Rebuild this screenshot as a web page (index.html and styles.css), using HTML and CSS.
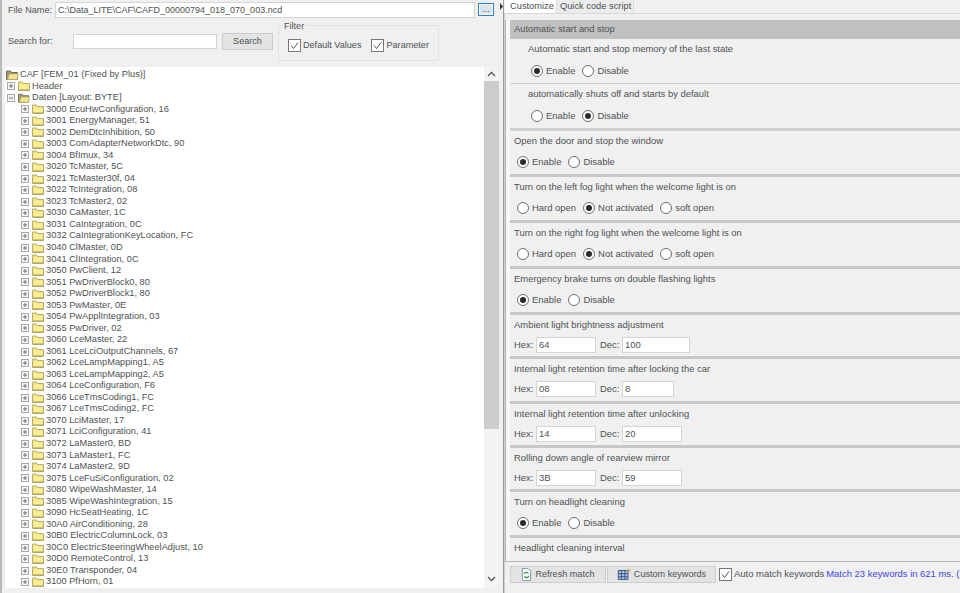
FILE: index.html
```html
<!DOCTYPE html>
<html lang="en">
<head>
<meta charset="utf-8">
<title>Coding</title>
<link rel="stylesheet" href="styles.css">
</head>
<body>
<svg class="defs" width="0" height="0" aria-hidden="true">
  <defs>
    <symbol id="folder" viewBox="0 0 12 10">
      <path d="M.5 2.500V1h4l1 1.500H11.500v7H.5z" fill="#f5e27c" stroke="#b5ad6c"/>
      <path d="M1.500 3.500h9v5h-9z" fill="#fbec96"/>
      <path d="M1 9h10.500" stroke="#a89f5a"/>
    </symbol>
    <symbol id="folderopen" viewBox="0 0 13 10">
      <path d="M.5 9.500V1h4l1 1.500h6v7z" fill="#9c9878" stroke="#6f6c54"/>
      <path d="M3.500 4h9L11 9.500H1.500z" fill="#f6e58a" stroke="#b5ad6c" stroke-width=".7"/>
    </symbol>
    <symbol id="plus" viewBox="0 0 8 8">
      <rect x=".5" y=".5" width="7" height="7" fill="#f4f4f4" stroke="#a8a8a8"/>
      <path d="M2 4h4M4 2v4" stroke="#6f7278"/>
    </symbol>
    <symbol id="minus" viewBox="0 0 8 8">
      <rect x=".5" y=".5" width="7" height="7" fill="#f4f4f4" stroke="#a8a8a8"/>
      <path d="M2 4h4" stroke="#6f7278"/>
    </symbol>
    <symbol id="check" viewBox="0 0 13 13">
      <rect x=".5" y=".5" width="12" height="12" fill="#fff" stroke="#777"/>
      <path d="M3 6.500l2.500 3L10 3.500" fill="none" stroke="#555"/>
    </symbol>
  </defs>
</svg>
<div class="app">
  <section class="left">
    <div class="file-row">
      <span class="label">File Name:</span>
      <div class="field file-field">C:\Data_LITE\CAF\CAFD_00000794_018_070_003.ncd</div>
      <div class="dots">...</div>
    </div>
    <div class="search-row">
      <span class="label search-label">Search for:</span>
      <div class="field search-field"></div>
      <div class="btn search-btn">Search</div>
      <div class="filter">
        <span class="filter-title">Filter</span>
        <span class="chk"><svg class="chk-box"><use href="#check"/></svg>Default Values</span>
        <span class="chk"><svg class="chk-box"><use href="#check"/></svg>Parameter</span>
      </div>
    </div>
    <div class="tree-wrap">
      <div class="tree">
        <div class="node n0"><svg class="fold"><use href="#folderopen"/></svg>CAF [FEM_01 (Fixed by Plus)]</div>
        <div class="node n1"><svg class="tog"><use href="#plus"/></svg><svg class="fold"><use href="#folder"/></svg>Header</div>
        <div class="node n1"><svg class="tog"><use href="#minus"/></svg><svg class="fold"><use href="#folderopen"/></svg>Daten [Layout: BYTE]</div>
        <div class="node n2"><svg class="tog"><use href="#plus"/></svg><svg class="fold"><use href="#folder"/></svg>3000 EcuHwConfiguration, 16</div>
        <div class="node n2"><svg class="tog"><use href="#plus"/></svg><svg class="fold"><use href="#folder"/></svg>3001 EnergyManager, 51</div>
        <div class="node n2"><svg class="tog"><use href="#plus"/></svg><svg class="fold"><use href="#folder"/></svg>3002 DemDtcInhibition, 50</div>
        <div class="node n2"><svg class="tog"><use href="#plus"/></svg><svg class="fold"><use href="#folder"/></svg>3003 ComAdapterNetworkDtc, 90</div>
        <div class="node n2"><svg class="tog"><use href="#plus"/></svg><svg class="fold"><use href="#folder"/></svg>3004 BfImux, 34</div>
        <div class="node n2"><svg class="tog"><use href="#plus"/></svg><svg class="fold"><use href="#folder"/></svg>3020 TcMaster, 5C</div>
        <div class="node n2"><svg class="tog"><use href="#plus"/></svg><svg class="fold"><use href="#folder"/></svg>3021 TcMaster30f, 04</div>
        <div class="node n2"><svg class="tog"><use href="#plus"/></svg><svg class="fold"><use href="#folder"/></svg>3022 TcIntegration, 08</div>
        <div class="node n2"><svg class="tog"><use href="#plus"/></svg><svg class="fold"><use href="#folder"/></svg>3023 TcMaster2, 02</div>
        <div class="node n2"><svg class="tog"><use href="#plus"/></svg><svg class="fold"><use href="#folder"/></svg>3030 CaMaster, 1C</div>
        <div class="node n2"><svg class="tog"><use href="#plus"/></svg><svg class="fold"><use href="#folder"/></svg>3031 CaIntegration, 0C</div>
        <div class="node n2"><svg class="tog"><use href="#plus"/></svg><svg class="fold"><use href="#folder"/></svg>3032 CaIntegrationKeyLocation, FC</div>
        <div class="node n2"><svg class="tog"><use href="#plus"/></svg><svg class="fold"><use href="#folder"/></svg>3040 ClMaster, 0D</div>
        <div class="node n2"><svg class="tog"><use href="#plus"/></svg><svg class="fold"><use href="#folder"/></svg>3041 ClIntegration, 0C</div>
        <div class="node n2"><svg class="tog"><use href="#plus"/></svg><svg class="fold"><use href="#folder"/></svg>3050 PwClient, 12</div>
        <div class="node n2"><svg class="tog"><use href="#plus"/></svg><svg class="fold"><use href="#folder"/></svg>3051 PwDriverBlock0, 80</div>
        <div class="node n2"><svg class="tog"><use href="#plus"/></svg><svg class="fold"><use href="#folder"/></svg>3052 PwDriverBlock1, 80</div>
        <div class="node n2"><svg class="tog"><use href="#plus"/></svg><svg class="fold"><use href="#folder"/></svg>3053 PwMaster, 0E</div>
        <div class="node n2"><svg class="tog"><use href="#plus"/></svg><svg class="fold"><use href="#folder"/></svg>3054 PwApplIntegration, 03</div>
        <div class="node n2"><svg class="tog"><use href="#plus"/></svg><svg class="fold"><use href="#folder"/></svg>3055 PwDriver, 02</div>
        <div class="node n2"><svg class="tog"><use href="#plus"/></svg><svg class="fold"><use href="#folder"/></svg>3060 LceMaster, 22</div>
        <div class="node n2"><svg class="tog"><use href="#plus"/></svg><svg class="fold"><use href="#folder"/></svg>3061 LceLciOutputChannels, 67</div>
        <div class="node n2"><svg class="tog"><use href="#plus"/></svg><svg class="fold"><use href="#folder"/></svg>3062 LceLampMapping1, A5</div>
        <div class="node n2"><svg class="tog"><use href="#plus"/></svg><svg class="fold"><use href="#folder"/></svg>3063 LceLampMapping2, A5</div>
        <div class="node n2"><svg class="tog"><use href="#plus"/></svg><svg class="fold"><use href="#folder"/></svg>3064 LceConfiguration, F6</div>
        <div class="node n2"><svg class="tog"><use href="#plus"/></svg><svg class="fold"><use href="#folder"/></svg>3066 LceTmsCoding1, FC</div>
        <div class="node n2"><svg class="tog"><use href="#plus"/></svg><svg class="fold"><use href="#folder"/></svg>3067 LceTmsCoding2, FC</div>
        <div class="node n2"><svg class="tog"><use href="#plus"/></svg><svg class="fold"><use href="#folder"/></svg>3070 LciMaster, 17</div>
        <div class="node n2"><svg class="tog"><use href="#plus"/></svg><svg class="fold"><use href="#folder"/></svg>3071 LciConfiguration, 41</div>
        <div class="node n2"><svg class="tog"><use href="#plus"/></svg><svg class="fold"><use href="#folder"/></svg>3072 LaMaster0, BD</div>
        <div class="node n2"><svg class="tog"><use href="#plus"/></svg><svg class="fold"><use href="#folder"/></svg>3073 LaMaster1, FC</div>
        <div class="node n2"><svg class="tog"><use href="#plus"/></svg><svg class="fold"><use href="#folder"/></svg>3074 LaMaster2, 9D</div>
        <div class="node n2"><svg class="tog"><use href="#plus"/></svg><svg class="fold"><use href="#folder"/></svg>3075 LceFuSiConfiguration, 02</div>
        <div class="node n2"><svg class="tog"><use href="#plus"/></svg><svg class="fold"><use href="#folder"/></svg>3080 WipeWashMaster, 14</div>
        <div class="node n2"><svg class="tog"><use href="#plus"/></svg><svg class="fold"><use href="#folder"/></svg>3085 WipeWashIntegration, 15</div>
        <div class="node n2"><svg class="tog"><use href="#plus"/></svg><svg class="fold"><use href="#folder"/></svg>3090 HcSeatHeating, 1C</div>
        <div class="node n2"><svg class="tog"><use href="#plus"/></svg><svg class="fold"><use href="#folder"/></svg>30A0 AirConditioning, 28</div>
        <div class="node n2"><svg class="tog"><use href="#plus"/></svg><svg class="fold"><use href="#folder"/></svg>30B0 ElectricColumnLock, 03</div>
        <div class="node n2"><svg class="tog"><use href="#plus"/></svg><svg class="fold"><use href="#folder"/></svg>30C0 ElectricSteeringWheelAdjust, 10</div>
        <div class="node n2"><svg class="tog"><use href="#plus"/></svg><svg class="fold"><use href="#folder"/></svg>30D0 RemoteControl, 13</div>
        <div class="node n2"><svg class="tog"><use href="#plus"/></svg><svg class="fold"><use href="#folder"/></svg>30E0 Transponder, 04</div>
        <div class="node n2"><svg class="tog"><use href="#plus"/></svg><svg class="fold"><use href="#folder"/></svg>3100 PfHorn, 01</div>
      </div>
      <div class="vscroll">
        <svg class="arrow" viewBox="0 0 9 6"><path d="M1 5l3.500-3.500L8 5" fill="none" stroke="#555" stroke-width="1.3"/></svg>
        <div class="thumb"></div>
        <svg class="arrow" viewBox="0 0 9 6"><path d="M1 1l3.500 3.500L8 1" fill="none" stroke="#555" stroke-width="1.3"/></svg>
      </div>
    </div>
  </section>
  <div class="splitter"><svg class="grip" viewBox="0 0 3 7"><path d="M0 0l3 3.500L0 7z" fill="#333"/></svg></div>
  <section class="right">
    <div class="tabs">
      <span class="tab active">Customize</span>
      <span class="tab">Quick code script</span>
    </div>
    <div class="page">
      <div class="list">
        <div class="group-head">Automatic start and stop</div>
        <div class="item sub"><div class="title">Automatic start and stop memory of the last state</div>
          <div class="opts"><span class="opt"><i class="radio on"></i>Enable</span><span class="opt"><i class="radio"></i>Disable</span></div></div>
        <div class="item sub last"><div class="title">automatically shuts off and starts by default</div>
          <div class="opts"><span class="opt"><i class="radio"></i>Enable</span><span class="opt"><i class="radio on"></i>Disable</span></div></div>
        <div class="item"><div class="title">Open the door and stop the window</div>
          <div class="opts"><span class="opt"><i class="radio on"></i>Enable</span><span class="opt"><i class="radio"></i>Disable</span></div></div>
        <div class="item"><div class="title">Turn on the left fog light when the welcome light is on</div>
          <div class="opts"><span class="opt"><i class="radio"></i>Hard open</span><span class="opt"><i class="radio on"></i>Not activated</span><span class="opt"><i class="radio"></i>soft open</span></div></div>
        <div class="item"><div class="title">Turn on the right fog light when the welcome light is on</div>
          <div class="opts"><span class="opt"><i class="radio"></i>Hard open</span><span class="opt"><i class="radio on"></i>Not activated</span><span class="opt"><i class="radio"></i>soft open</span></div></div>
        <div class="item"><div class="title">Emergency brake turns on double flashing lights</div>
          <div class="opts"><span class="opt"><i class="radio on"></i>Enable</span><span class="opt"><i class="radio"></i>Disable</span></div></div>
        <div class="item num"><div class="title">Ambient light brightness adjustment</div>
          <div class="vals"><span class="vlabel">Hex:</span><div class="field hex">64</div><span class="vlabel dec">Dec:</span><div class="field d3">100</div></div></div>
        <div class="item num"><div class="title">Internal light retention time after locking the car</div>
          <div class="vals"><span class="vlabel">Hex:</span><div class="field hex">08</div><span class="vlabel dec">Dec:</span><div class="field d1">8</div></div></div>
        <div class="item num"><div class="title">Internal light retention time after unlocking</div>
          <div class="vals"><span class="vlabel">Hex:</span><div class="field hex">14</div><span class="vlabel dec">Dec:</span><div class="field d2">20</div></div></div>
        <div class="item num"><div class="title">Rolling down angle of rearview mirror</div>
          <div class="vals"><span class="vlabel">Hex:</span><div class="field hex">3B</div><span class="vlabel dec">Dec:</span><div class="field d2">59</div></div></div>
        <div class="item"><div class="title">Turn on headlight cleaning</div>
          <div class="opts"><span class="opt"><i class="radio on"></i>Enable</span><span class="opt"><i class="radio"></i>Disable</span></div></div>
        <div class="item tail"><div class="title">Headlight cleaning interval</div></div>
      </div>
      <div class="actions">
        <div class="btn act act1"><svg class="ico" viewBox="0 0 12 14"><path d="M1.500.5h6l3 3v10h-9z" fill="#fff" stroke="#7e8f9e"/><path d="M3.500 6.500a2.500 2.500 0 0 1 4.600-.6M8.500 8.500a2.500 2.500 0 0 1-4.600.6" fill="none" stroke="#2e9a3c" stroke-width="1.500"/></svg>Refresh match</div>
        <div class="btn act act2"><svg class="ico wide" viewBox="0 0 16 14"><rect x="1.500" y="2.500" width="11" height="10" fill="#a9c4e6" stroke="#2f4a7c"/><path d="M5 2.500v10M9 2.500v10M1.500 6h11M1.500 9.500h11" stroke="#2f4a7c"/><path d="M13.500 .5v4M11.500 2.500h4" stroke="#d49a2a"/></svg>Custom keywords</div>
        <span class="auto"><svg class="chk-box"><use href="#check"/></svg>Auto match keywords</span>
        <span class="match">Match 23 keywords in 621 ms. (I</span>
      </div>
    </div>
  </section>
</div>
</body>
</html>
```
FILE: styles.css
```css
* { box-sizing: border-box; }
html, body { margin: 0; height: 100%; }
body {
  width: 960px; height: 593px; overflow: hidden; background: #f0f0f0;
  font: 9.1px/12px "Liberation Sans", Arial, sans-serif; color: #4e5254;
}
.defs { position: absolute; }
.app { display: flex; width: 960px; height: 593px; }
.left { width: 500px; flex: none; display: flex; flex-direction: column; padding-left: 3px; border-left: 2px solid #b9b9b9; }
.label { white-space: nowrap; }
.field { background: #fff; border: 1px solid #d4d4d4; padding: 0 2px; height: 16px; line-height: 14px; white-space: nowrap; overflow: hidden; }
.file-row { display: flex; align-items: center; height: 18px; padding: 1px 0 0 3px; }
.file-row .label { width: 47px; flex: none; }
.file-field { width: 420px; flex: none; font-size: 9px; }
.dots { width: 16px; height: 13px; margin-left: 3px; border: 1px solid #2f7fd0; background: #dde4ee; text-align: center; line-height: 11px; box-shadow: inset 0 0 0 1px #fff; }
.search-row { display: flex; align-items: flex-start; height: 49px; padding-top: 6px; position: relative; }
.search-label { width: 68px; padding: 11px 0 0 3px; flex: none; }
.search-field { width: 144px; height: 15px; margin-top: 10px; flex: none; }
.btn { background: #e3e3e3; border: 1px solid #cdcdcd; text-align: center; }
.search-btn { width: 51px; height: 17px; margin: 9px 0 0 5px; line-height: 15px; flex: none; }
.filter { position: relative; display: flex; align-items: center; gap: 10px; width: 161px; height: 36px; margin: 1px 0 0 5px; border: 1px solid #e2e2e2; padding: 4px 0 0 9px; }
.filter-title { position: absolute; left: 4px; top: -6px; background: #f0f0f0; padding: 0 1px; }
.chk { display: flex; align-items: center; gap: 2px; white-space: nowrap; }
.chk-box { width: 13px; height: 13px; flex: none; display: block; }
.tree-wrap { height: 521px; flex: none; display: flex; }
.tree { width: 479px; flex: none; background: #fff; padding-top: 2px; overflow: hidden; font-size: 9.25px; }
.node { height: 11.545px; line-height: 11.545px; display: flex; align-items: center; white-space: nowrap; }
.n0 { padding-left: 1px; }
.n0 .fold { width: 13px; margin-right: 1px; }
.n1 { padding-left: 2px; }
.n2 { padding-left: 16px; }
.tog { width: 8px; height: 8px; flex: none; margin-right: 3px; }
.fold { width: 12px; height: 10px; flex: none; margin-right: 2px; }
.vscroll { width: 15px; flex: none; background: #f3f3f3; display: flex; flex-direction: column; align-items: stretch; }
.arrow { width: 9px; height: 6px; margin: 4px 3px; flex: none; }
.thumb { height: 348px; background: #cdcdcd; }
.vscroll .arrow:last-child { margin-top: auto; margin-bottom: 6px; }
.splitter { width: 4px; flex: none; border-right: 1px solid #9a9a9a; }
.grip { display: block; width: 3px; height: 7px; margin-top: 3px; }
.right { flex: 1; min-width: 0; display: flex; flex-direction: column; font-size: 9.45px; }
.tabs { display: flex; height: 13px; flex: none; padding-left: 1px; font-size: 9.3px; }
.tab { padding: 0 2px 0 3px; line-height: 12px; background: #ececec; border-right: 1px solid #dcdcdc; white-space: nowrap; }
.tab.active { background: #fff; padding: 0 2px 0 5px; }
.page { flex: 1; min-height: 0; display: flex; flex-direction: column; background: #f0f0f0; border-top: 1px solid #d8d8d8; padding-top: 6px; border-left: 1px solid #d0d0d0; }
.list { height: 542px; border-left: 1px solid #b4b4b4; border-bottom: 1px solid #b4b4b4; flex: none; width: 456px; overflow: hidden; padding-left: 4px; background: #f7f7f7; }
.group-head { height: 19px; line-height: 19px; background: #c0c0c0; padding-left: 4px; font-size: 9.35px; }
.item { height: 46.1px; padding: 3px 0 0 4px; border-bottom: 3px solid #c8c8c8; background: #f0f0f0; }
.item.sub { padding-left: 18px; border-bottom: 1px solid #d0d0d0; height: 45px; }
.item.sub.last { border-bottom-width: 3px; height: 47px; }
.item.num { height: 44.1px; }
.item.tail { border: 0; }
.title { height: 12px; margin-top: 1px; white-space: nowrap; }
.opts { display: flex; margin-top: 8px; height: 14px; align-items: center; padding-left: 3px; }
.item.sub .opts { margin-top: 9px; }
.opt { display: flex; align-items: center; gap: 3px; margin-right: 7px; white-space: nowrap; }
.radio { width: 12px; height: 12px; border: 1px solid #6f6f6f; border-radius: 50%; background: #fff; flex: none; position: relative; }
.radio.on::after { content: ""; position: absolute; inset: 2px; border-radius: 50%; background: #2a2a2a; }
.vals { display: flex; align-items: center; margin-top: 6px; height: 16px; }
.vlabel { width: 18px; flex: none; }
.hex { width: 60px; }
.dec { margin-left: 4px; }
.vals .field { height: 16px; margin-left: 4px; }
.d3 { width: 68px; } .d1 { width: 52px; } .d2 { width: 60px; }
.actions { display: flex; align-items: center; height: 20px; margin-top: 2px; white-space: nowrap; }
.act { height: 17px; line-height: 15px; display: flex; align-items: center; justify-content: center; gap: 3px; flex: none; font-size: 9.1px; }
.act1 { width: 96px; margin-left: 5px; }
.act2 { width: 109px; margin-left: 1px; }
.ico { width: 11px; height: 13px; flex: none; }
.ico.wide { width: 14px; }
.auto { display: flex; align-items: center; gap: 2px; margin-left: 3px; }
.match { margin-left: 2px; color: #3c46e0; }
```
